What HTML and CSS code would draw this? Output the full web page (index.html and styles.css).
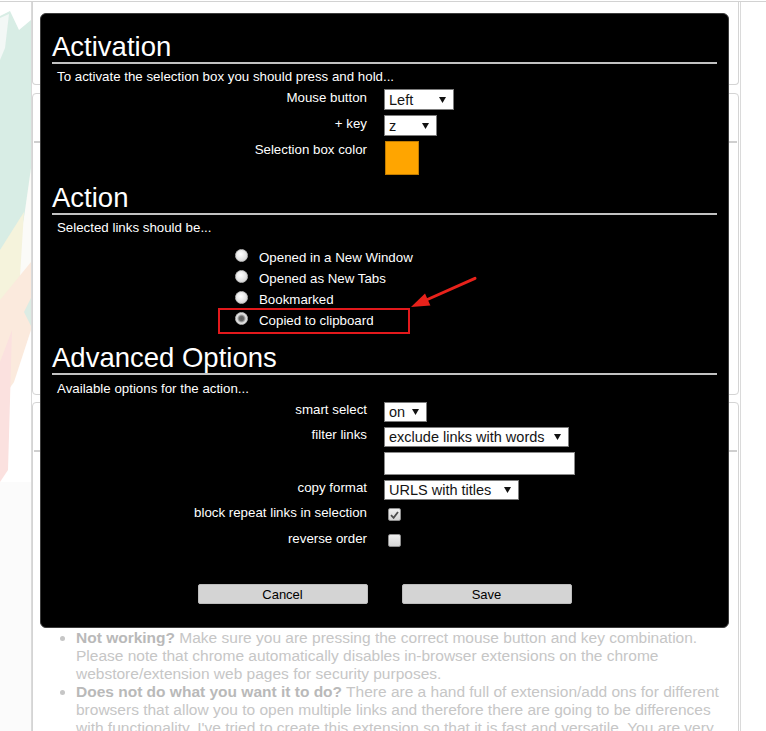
FILE: index.html
```html
<!DOCTYPE html>
<html lang="en">
<head>
<meta charset="utf-8">
<title>Options</title>
<link rel="stylesheet" href="styles.css">
</head>
<body>
<div class="page">
  <svg class="bg-art" width="32" height="731" viewBox="0 0 32 731" aria-hidden="true">
    <polygon points="0,16 10,11 19,30 31,20 31,190 14,262 0,330" fill="#d8ede5"/>
    <polygon points="0,18 9,14 5,48 0,60" fill="#f3f8f6"/>
    <polygon points="31,168 31,300 7,338" fill="#fbfbf8"/>
    <polygon points="0,250 24,212 19,292 0,332" fill="#f5f3dc"/>
    <polygon points="0,300 31,262 31,330 14,382 0,402" fill="#fbeadd"/>
    <polygon points="24,312 31,298 31,326" fill="#dcece4"/>
    <polygon points="0,362 12,330 8,470 0,482" fill="#fbe1df"/>
    <rect x="0" y="482" width="31" height="249" fill="#fbfbfb"/>
  </svg>
  <div class="topline"></div>
  <div class="wrap">
    <div class="card card-1"></div>
    <div class="card card-2"><div class="card-rule"></div></div>
    <div class="card card-3">
      <div class="card-rule"></div>
      <ul class="notes">
        <li><span class="note-key">Not working?</span> Make sure you are pressing the correct mouse button and key combination. Please note that chrome automatically disables in-browser extensions on the chrome webstore/extension web pages for security purposes.</li>
        <li><span class="note-key">Does not do what you want it to do?</span> There are a hand full of extension/add ons for different browsers that allow you to open multiple links and therefore there are going to be differences with functionality. I've tried to create this extension so that it is fast and versatile. You are very welcome to suggest new features.</li>
      </ul>
    </div>
  </div>

  <div class="modal">
    <h2 class="sec-title">Activation</h2>
    <p class="sec-desc">To activate the selection box you should press and hold...</p>
    <div class="form-grid grid-act">
      <div class="lbl">Mouse button</div>
      <div class="sel w-mouse"><span>Left</span><svg class="caret" width="7" height="6" viewBox="0 0 7 6"><polygon points="0,0 7,0 3.5,6"/></svg></div>
      <div class="lbl">+ key</div>
      <div class="sel w-key"><span>z</span><svg class="caret" width="7" height="6" viewBox="0 0 7 6"><polygon points="0,0 7,0 3.5,6"/></svg></div>
      <div class="lbl">Selection box color</div>
      <div class="swatch"></div>
    </div>

    <h2 class="sec-title sec-action">Action</h2>
    <p class="sec-desc">Selected links should be...</p>
    <ul class="radios">
      <li class="radio-row"><span class="radio"></span><span>Opened in a New Window</span></li>
      <li class="radio-row"><span class="radio"></span><span>Opened as New Tabs</span></li>
      <li class="radio-row"><span class="radio"></span><span>Bookmarked</span></li>
      <li class="radio-row"><span class="radio radio-on"></span><span>Copied to clipboard</span><span class="hl"></span></li>
    </ul>

    <h2 class="sec-title sec-adv">Advanced Options</h2>
    <p class="sec-desc sec-desc-adv">Available options for the action...</p>
    <div class="form-grid grid-adv">
      <div class="lbl">smart select</div>
      <div class="sel w-smart"><span>on</span><svg class="caret" width="7" height="6" viewBox="0 0 7 6"><polygon points="0,0 7,0 3.5,6"/></svg></div>
      <div class="lbl">filter links</div>
      <div class="sel w-filter"><span>exclude links with words</span><svg class="caret" width="7" height="6" viewBox="0 0 7 6"><polygon points="0,0 7,0 3.5,6"/></svg></div>
      <div class="lbl"></div>
      <div class="textbox"></div>
      <div class="lbl">copy format</div>
      <div class="sel w-copy"><span>URLS with titles</span><svg class="caret" width="7" height="6" viewBox="0 0 7 6"><polygon points="0,0 7,0 3.5,6"/></svg></div>
      <div class="lbl">block repeat links in selection</div>
      <div class="chk"><svg width="9" height="8" viewBox="0 0 9 8"><path d="M1 4.2 L3.6 6.8 L8 1" fill="none" stroke="#4d4d4d" stroke-width="1.8"/></svg></div>
      <div class="lbl">reverse order</div>
      <div class="chk"></div>
    </div>

    <div class="actions">
      <div class="btn">Cancel</div>
      <div class="btn">Save</div>
    </div>
  </div>

  <svg class="arrow" width="80" height="45" viewBox="0 0 80 45" aria-hidden="true">
    <line x1="75" y1="8.3" x2="24" y2="31" stroke="#e8221b" stroke-width="3" stroke-linecap="round"/>
    <polygon points="11,37 30.4,35.4 25,23.6" fill="#e8221b"/>
  </svg>
</div>
</body>
</html>
```

FILE: styles.css
```css
* { box-sizing: border-box; }

html, body {
  margin: 0;
  padding: 0;
  background: #fff;
}

body {
  font-family: "Liberation Sans", Arial, sans-serif;
}

.page {
  position: relative;
  width: 766px;
  height: 731px;
  overflow: hidden;
  background: #fff;
}

.bg-art {
  position: absolute;
  left: 0;
  top: 0;
}

.topline {
  position: relative;
  height: 2px;
  border-bottom: 1px solid #d2d2d2;
}

.wrap {
  position: relative;
  margin-left: 31px;
  width: 710px;
  height: 729px;
  border-left: 1px solid #dadada;
  border-right: 1px solid #dadada;
  background: #fff;
}

.card {
  width: 707px;
  border: 1px solid #d4d4d4;
  border-radius: 4px;
  background: #fff;
}

.card-1 {
  height: 83px;
  border-top: none;
  border-radius: 0 0 4px 4px;
}

.card-2 {
  margin-top: 8px;
  height: 302px;
}

.card-3 {
  margin-top: 7px;
  height: 400px;
}

.card-rule {
  height: 2px;
  margin: 47px 1px 0;
  background: #cfcfcf;
}

.notes {
  margin: 177px 0 0;
  padding: 0 10px 0 43px;
  color: #c6c6c6;
  font-size: 15.5px;
  line-height: 18px;
}

.note-key {
  font-weight: bold;
  color: #b9b9b9;
}

/* modal */
.modal {
  position: absolute;
  left: 40px;
  top: 13px;
  width: 689px;
  padding: 18px 11px 23px;
  background: #000;
  border: 1px solid #3c3c3c;
  border-radius: 6px;
  color: #fff;
}

.sec-title {
  margin: 0;
  font-size: 27.5px;
  line-height: 30px;
  font-weight: normal;
  border-bottom: 2px solid #c2c2c2;
}

.sec-action { margin-top: 8px; }
.sec-adv { margin-top: 12.5px; }

.sec-desc {
  margin: 5px 0 0;
  padding-left: 5px;
  font-size: 13.3px;
  line-height: 15px;
}

.sec-desc-adv { margin-top: 6px; }

.form-grid {
  display: grid;
  grid-template-columns: 315px auto;
  column-gap: 17px;
  row-gap: 5px;
  margin-top: 5px;
  justify-items: start;
  align-items: start;
}

.grid-adv { margin-top: 6px; }

.lbl {
  justify-self: end;
  text-align: right;
  font-size: 13.3px;
  line-height: 15px;
}

.grid-act .lbl { padding-top: 1px; }

.sel {
  display: flex;
  align-items: center;
  justify-content: space-between;
  height: 20px;
  padding: 0 7px 0 4px;
  background: #fff;
  border: 1px solid #7c7c7c;
  color: #141414;
  font-size: 14.5px;
  white-space: nowrap;
}

.grid-act .sel { height: 21px; }

.caret { flex: none; fill: #111; }

.w-mouse { width: 70px; }
.w-key { width: 53px; }
.w-smart { width: 43px; }
.w-filter { width: 185px; }
.w-copy { width: 135px; }

.swatch {
  width: 34px;
  height: 34px;
  margin-left: 1px;
  background: #ffa500;
  border: 1px solid #c27c00;
}

.textbox {
  width: 191px;
  height: 23px;
  background: #fff;
  border: 1px solid #8a8a8a;
}

.chk {
  display: flex;
  align-items: center;
  justify-content: center;
  width: 13px;
  height: 13px;
  margin: 3px 0 5px 4px;
  border: 1px solid #8e8e8e;
  border-radius: 2px;
  background: linear-gradient(#efefef, #d5d5d5);
}

/* radios */
.radios {
  list-style: none;
  margin: 11.7px 0 0 183px;
  padding: 0;
}

.radio-row {
  position: relative;
  display: flex;
  align-items: flex-start;
  height: 21px;
  font-size: 13.3px;
  line-height: 21px;
}

.radio {
  flex: none;
  width: 13px;
  height: 13px;
  margin: 2px 11px 0 0;
  border-radius: 50%;
  border: 1px solid #bcbcbc;
  background: radial-gradient(circle at 42% 38%, #ffffff 0, #eeeeee 35%, #cacaca 100%);
}

.radio-on {
  background: radial-gradient(circle at 50% 50%, #5a5a5a 0, #666 2.2px, #a5a5a5 3.4px, #e4e4e4 4.6px, #cdcdcd 100%);
}

.hl {
  position: absolute;
  left: -17px;
  top: -2px;
  width: 192px;
  height: 26px;
  border: 2px solid #e3191c;
}

/* buttons */
.actions {
  display: flex;
  justify-content: center;
  gap: 34px;
  margin-top: 32px;
}

.btn {
  display: flex;
  align-items: center;
  justify-content: center;
  width: 170px;
  height: 20px;
  background: #d4d4d4;
  border: 1px solid #bdbdbd;
  border-radius: 2px;
  color: #000;
  font-size: 13px;
}

.arrow {
  position: absolute;
  left: 400px;
  top: 270px;
}
```
